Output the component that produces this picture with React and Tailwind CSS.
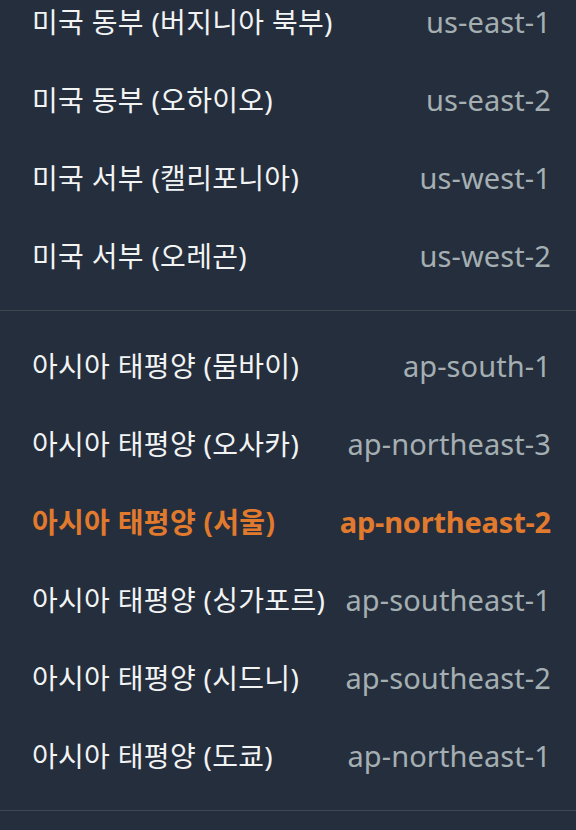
const groups = [
  [
    { name: '미국 동부 (버지니아 북부)', code: 'us-east-1' },
    { name: '미국 동부 (오하이오)', code: 'us-east-2' },
    { name: '미국 서부 (캘리포니아)', code: 'us-west-1' },
    { name: '미국 서부 (오레곤)', code: 'us-west-2' }
  ],
  [
    { name: '아시아 태평양 (뭄바이)', code: 'ap-south-1' },
    { name: '아시아 태평양 (오사카)', code: 'ap-northeast-3' },
    { name: '아시아 태평양 (서울)', code: 'ap-northeast-2', active: true },
    { name: '아시아 태평양 (싱가포르)', code: 'ap-southeast-1' },
    { name: '아시아 태평양 (시드니)', code: 'ap-southeast-2' },
    { name: '아시아 태평양 (도쿄)', code: 'ap-northeast-1' }
  ]
]

export default function App() {
  return (
    <div
      className="h-[830px] overflow-hidden bg-[#242e3d]"
      style={{ fontFamily: '"Noto Sans", "Noto Sans CJK KR", sans-serif' }}
    >
      <div className="-mt-[17px]">
        {groups.map((regions, i) => (
          <div key={i} className="border-b border-[#414750] pt-4 pb-[15px] first:pt-0">
            {regions.map(region => (
              <div
                key={region.code}
                className={`flex h-[78px] items-center justify-between pl-8 pr-[25px] text-[28px] ${
                  region.active ? 'font-bold text-[#e27a2e]' : 'text-[#f2f3f3]'
                }`}
              >
                <span className="tracking-[0.3px]">{region.name}</span>
                <span
                  className={`text-[29px] ${
                    region.active ? 'tracking-[-0.2px]' : 'tracking-[0.1px] text-[#a5afb2]'
                  }`}
                >
                  {region.code}
                </span>
              </div>
            ))}
          </div>
        ))}
      </div>
    </div>
  )
}
